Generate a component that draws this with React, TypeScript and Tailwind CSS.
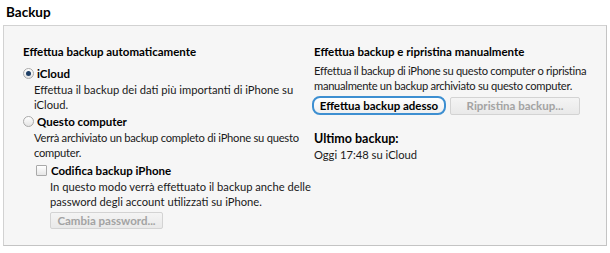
import React from 'react';

const font = { fontFamily: 'Lato, "Noto Sans", sans-serif' };

function Radio({ checked }: { checked?: boolean }) {
  return (
    <span className="flex h-[11px] w-[11px] shrink-0 items-center justify-center rounded-full border border-[#a9a9a9] bg-gradient-to-b from-[#ffffff] to-[#e4e4e4]">
      {checked && <span className="h-[5px] w-[5px] rounded-full bg-[#1e3f66]" />}
    </span>
  );
}

function DisabledButton({ label, className }: { label: string; className?: string }) {
  return (
    <div
      className={`flex items-center justify-center whitespace-nowrap rounded-[2px] border border-[#d3d3d3] bg-gradient-to-b from-[#f4f4f4] to-[#e9e9e9] text-[11.5px] font-bold text-[#a3a3a3] ${className ?? ''}`}
    >
      {label}
    </div>
  );
}

export default function App() {
  return (
    <div className="h-[253px] w-[610px] bg-white text-[11.2px] leading-[15px] text-[#1a1a1a]" style={font}>
      <div className="px-[6px] pt-[3px] text-[13.5px] font-bold leading-[18px] text-black">Backup</div>
      <div className="ml-[3px] mt-[4px] h-[221px] w-[604px] border border-[#d2d2d2] border-b-[#c4c4c4] border-r-[#c4c4c4] bg-[#f6f6f6] pl-[19px] pt-[18px]">
        <div className="grid grid-cols-[291px_1fr] whitespace-nowrap">
          {/* left column */}
          <div>
            <div className="text-[11.5px] font-bold text-black">Effettua backup automaticamente</div>
            <div className="mt-[7px] flex items-center gap-[3px]">
              <Radio checked />
              <span className="text-[11.5px] font-bold text-black">iCloud</span>
            </div>
            <div className="ml-[11px] mt-[1px]">
              Effettua il backup dei dati più importanti di iPhone su
              <br />
              iCloud.
            </div>
            <div className="mt-[2px] flex items-center gap-[3px]">
              <Radio />
              <span className="text-[11.5px] font-bold text-black">Questo computer</span>
            </div>
            <div className="ml-[11px] mt-[1px] tracking-[-0.25px]">
              Verrà archiviato un backup completo di iPhone su questo
              <br />
              computer.
            </div>
            <div className="ml-[13px] mt-[3px] flex items-center gap-[4px]">
              <span className="h-[11px] w-[11px] shrink-0 rounded-[1px] border border-[#a9a9a9] bg-gradient-to-b from-[#ffffff] to-[#e6e6e6]" />
              <span className="text-[11.5px] font-bold text-black">Codifica backup iPhone</span>
            </div>
            <div className="ml-[27px] mt-[1px]">
              In questo modo verrà effettuato il backup anche delle
              <br />
              password degli account utilizzati su iPhone.
            </div>
            <div className="ml-[27px] mt-[3px]">
              <DisabledButton label="Cambia password..." className="h-[17px] w-[113px]" />
            </div>
          </div>
          {/* right column */}
          <div>
            <div className="text-[11.5px] font-bold text-black">Effettua backup e ripristina manualmente</div>
            <div className="mt-[4px] tracking-[-0.3px]">
              Effettua il backup di iPhone su questo computer o ripristina
              <br />
              manualmente un backup archiviato su questo computer.
            </div>
            <div className="mt-[3px] flex items-center gap-[4px]">
              <div className="-ml-[2px] flex h-[19px] w-[134px] items-center justify-center rounded-[8px] border-2 border-[#3d8fd1] bg-gradient-to-b from-[#ffffff] to-[#f0f0f0] text-[11.5px] font-bold text-black">
                Effettua backup adesso
              </div>
              <DisabledButton label="Ripristina backup..." className="h-[18px] w-[130px]" />
            </div>
            <div className="mt-[16px] text-[12.5px] font-bold leading-[16px] text-black">Ultimo backup:</div>
            <div>Oggi 17:48 su iCloud</div>
          </div>
        </div>
      </div>
    </div>
  );
}
